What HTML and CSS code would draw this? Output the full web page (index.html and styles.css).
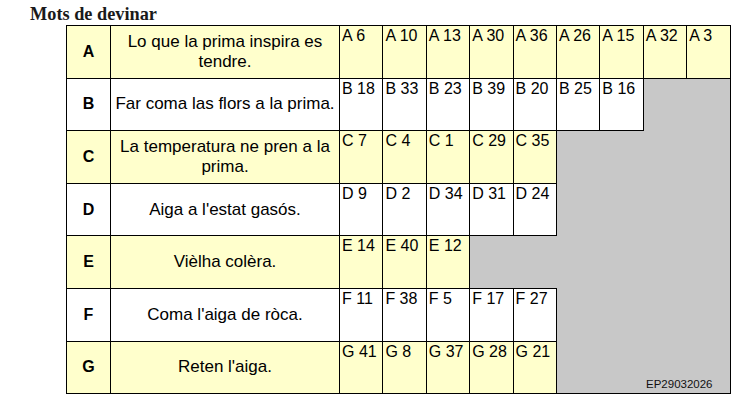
FILE: index.html
```html
<!DOCTYPE html>
<html lang="oc">
<head>
<meta charset="utf-8">
<title>Mots de devinar</title>
<link rel="stylesheet" href="styles.css">
</head>
<body>
<div class="page">
  <h1 class="title">Mots de devinar</h1>
  <table class="grid">
    <colgroup>
      <col class="c-letter">
      <col class="c-desc">
      <col class="c-num"><col class="c-num"><col class="c-num"><col class="c-num"><col class="c-num"><col class="c-num"><col class="c-num"><col class="c-num"><col class="c-num">
    </colgroup>
    <tbody>
      <tr class="yellow">
        <td class="letter">A</td>
        <td class="desc">Lo que la prima inspira es tendre.</td>
        <td class="num">A 6</td><td class="num">A 10</td><td class="num">A 13</td><td class="num">A 30</td><td class="num">A 36</td><td class="num">A 26</td><td class="num">A 15</td><td class="num">A 32</td><td class="num">A 3</td>
      </tr>
      <tr class="white">
        <td class="letter">B</td>
        <td class="desc">Far coma las flors a la prima.</td>
        <td class="num">B 18</td><td class="num">B 33</td><td class="num">B 23</td><td class="num">B 39</td><td class="num">B 20</td><td class="num">B 25</td><td class="num">B 16</td><td class="empty"></td><td class="empty"></td>
      </tr>
      <tr class="yellow">
        <td class="letter">C</td>
        <td class="desc">La temperatura ne pren a la prima.</td>
        <td class="num">C 7</td><td class="num">C 4</td><td class="num">C 1</td><td class="num">C 29</td><td class="num">C 35</td><td class="empty"></td><td class="empty"></td><td class="empty"></td><td class="empty"></td>
      </tr>
      <tr class="white">
        <td class="letter">D</td>
        <td class="desc">Aiga a l'estat gasós.</td>
        <td class="num">D 9</td><td class="num">D 2</td><td class="num">D 34</td><td class="num">D 31</td><td class="num">D 24</td><td class="empty"></td><td class="empty"></td><td class="empty"></td><td class="empty"></td>
      </tr>
      <tr class="yellow">
        <td class="letter">E</td>
        <td class="desc">Vièlha colèra.</td>
        <td class="num">E 14</td><td class="num">E 40</td><td class="num">E 12</td><td class="empty"></td><td class="empty"></td><td class="empty"></td><td class="empty"></td><td class="empty"></td><td class="empty"></td>
      </tr>
      <tr class="white">
        <td class="letter">F</td>
        <td class="desc">Coma l'aiga de ròca.</td>
        <td class="num">F 11</td><td class="num">F 38</td><td class="num">F 5</td><td class="num">F 17</td><td class="num">F 27</td><td class="empty"></td><td class="empty"></td><td class="empty"></td><td class="empty"></td>
      </tr>
      <tr class="yellow">
        <td class="letter">G</td>
        <td class="desc">Reten l'aiga.</td>
        <td class="num">G 41</td><td class="num">G 8</td><td class="num">G 37</td><td class="num">G 28</td><td class="num">G 21</td><td class="empty stamp" colspan="4">EP29032026</td>
      </tr>
    </tbody>
  </table>
</div>
</body>
</html>
```

FILE: styles.css
```css
html, body {
  margin: 0;
  padding: 0;
  background: #ffffff;
}

body {
  font-family: "Liberation Sans", Arial, sans-serif;
  color: #000000;
}

.page {
  padding: 3px 0 0 30px;
}

.title {
  margin: 0;
  font-family: "Liberation Serif", "Times New Roman", serif;
  font-weight: bold;
  font-size: 18.3px;
  line-height: 22px;
  color: #1a1a1a;
}

.grid {
  margin-left: 36px;
  border-collapse: collapse;
  table-layout: fixed;
  width: 664px;
  border: 1px solid #000000;
}

.c-letter { width: 44px; }
.c-desc { width: 229px; }
.c-num { width: 43.4px; }

.grid tr {
  height: 52.6px;
}

.grid td {
  border: 1px solid #000000;
  padding: 0;
}

.yellow td { background: #ffffcc; }
.white td { background: #ffffff; }

.grid td.empty {
  background: #c8c8c8;
  border: none;
}

.letter {
  text-align: center;
  vertical-align: middle;
  font-weight: bold;
  font-size: 16px;
}

.desc {
  text-align: center;
  vertical-align: middle;
  font-size: 17px;
  line-height: 20px;
}

.grid td.desc {
  padding: 0 3px;
}

.num {
  vertical-align: top;
  text-align: left;
  font-size: 16px;
  line-height: 18px;
  white-space: nowrap;
  overflow: hidden;
}

.grid td.num {
  padding: 1px 0 0 2px;
}

.grid td.stamp {
  text-align: right;
  vertical-align: bottom;
  font-size: 11.5px;
  line-height: 14px;
  padding: 0 17px 2px 0;
  color: #111111;
}
```
